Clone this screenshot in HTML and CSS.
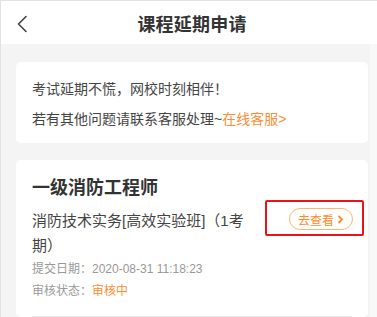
FILE: index.html
```html
<!DOCTYPE html>
<html lang="zh-CN">
<head>
<meta charset="utf-8">
<title>课程延期申请</title>
<link rel="stylesheet" href="styles.css">
</head>
<body>
<div class="frame">
  <header class="header">
    <svg class="back" width="12" height="18" viewBox="0 0 12 18"><path d="M10 1.5 L2.5 9 L10 16.5" fill="none" stroke="#444" stroke-width="1.6" stroke-linecap="round" stroke-linejoin="round"/></svg>
    <h1 class="title">课程延期申请</h1>
  </header>
  <main class="content">
    <section class="card notice">
      <p class="line">考试延期不慌，网校时刻相伴！</p>
      <p class="line">若有其他问题请联系客服处理~<span class="link">在线客服&gt;</span></p>
    </section>
    <section class="card course">
      <h2 class="course-title">一级消防工程师</h2>
      <div class="row">
        <p class="course-name">消防技术实务[高效实验班]（1考期）</p>
        <button class="view-btn">去查看<svg width="7" height="9" viewBox="0 0 7 9"><path d="M1.5 1 L5 4.5 L1.5 8" fill="none" stroke="#ff8b2a" stroke-width="1.8"/></svg></button>
      </div>
      <p class="meta">提交日期：2020-08-31 11:18:23</p>
      <p class="meta">审核状态：<span class="status">审核中</span></p>
      <div class="divider"></div>
      <div class="highlight"></div>
    </section>
  </main>
</div>
</body>
</html>
```
FILE: styles.css
```css
html, body {
  margin: 0;
  padding: 0;
}
body {
  background: #f8f8f8;
  font-family: "Liberation Sans", "Noto Sans CJK SC", sans-serif;
  color: #333;
  overflow: hidden;
}
.frame {
  border-top: 1px solid #e2e2e2;
  border-left: 1px solid #e2e2e2;
  height: 316px;
  overflow: hidden;
}
.header {
  height: 43px;
  background: #fff;
  display: flex;
  align-items: center;
  justify-content: center;
  position: relative;
  padding-left: 6px;
}
.back {
  position: absolute;
  left: 15px;
  top: 14px;
}
.title {
  margin: 0;
  font-size: 18px;
  font-weight: bold;
  color: #333;
  letter-spacing: 0.2px;
}
.content {
  width: 354px;
  background: #f4f4f4;
  padding: 18px 0 0 15px;
  height: 300px;
}
.card {
  width: 352px;
  background: #fff;
  border-radius: 5px;
  box-sizing: border-box;
  margin-bottom: 17px;
}
.notice {
  padding: 12px 16px 9px;
}
.line {
  margin: 0;
  font-size: 14px;
  line-height: 30px;
  color: #444;
}
.link {
  color: #ff8d33;
}
.course {
  position: relative;
  padding: 15px 15px 0 16px;
}
.course-title {
  margin: 0;
  font-size: 18px;
  line-height: 26px;
  font-weight: bold;
  color: #333;
}
.row {
  display: flex;
  justify-content: space-between;
  align-items: flex-start;
  margin-top: 7px;
}
.course-name {
  margin: 0;
  width: 224px;
  font-size: 15px;
  line-height: 25px;
  color: #444;
}
.view-btn {
  margin-top: 0;
  width: 64px;
  height: 22px;
  border: 1px solid #ffb673;
  border-radius: 11px;
  background: #fff;
  color: #ff8b2a;
  font-family: "Noto Sans CJK SC", sans-serif;
  font-size: 12px;
  display: flex;
  align-items: center;
  justify-content: center;
  gap: 3px;
  padding: 0;
}
.meta {
  margin: 0;
  font-size: 12px;
  line-height: 22px;
  color: #999;
}
.meta:first-of-type {
  margin-top: 0;
}
.status {
  color: #ff8d33;
}
.divider {
  margin-top: 14px;
  height: 1px;
  background: #ececec;
  margin-right: 1px;
}
.highlight {
  position: absolute;
  left: 249px;
  top: 40px;
  width: 95px;
  height: 32px;
  border: 2px solid #e8141a;
  border-radius: 2px;
}
```
